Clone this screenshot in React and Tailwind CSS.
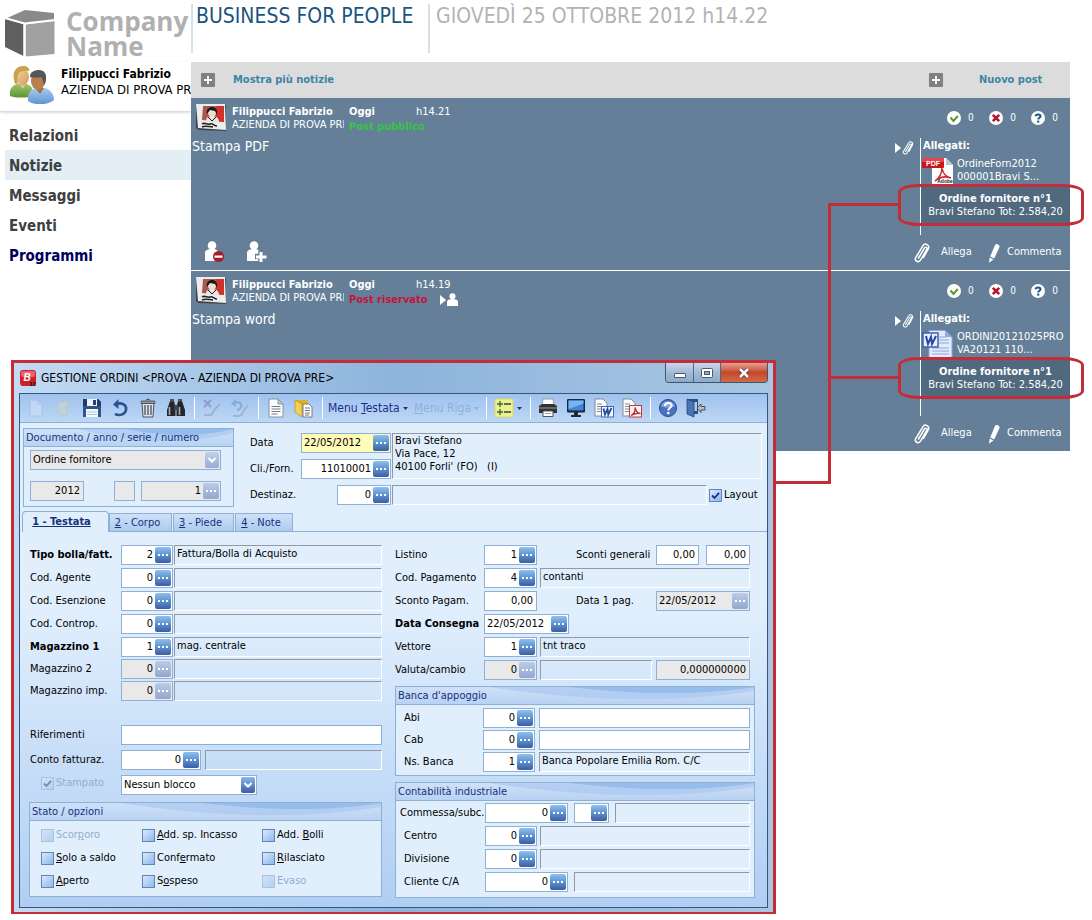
import React, { useId, useState } from "react";

/* ---------- Feed icons ---------- */

function CubeLogo() {
  return (
    <svg viewBox="0 0 50 48" className="h-12 w-[50px] shrink-0" aria-hidden="true">
      <path d="M2 9 20 1 49 4 49 11 20 14.500Z" fill="#8a8a8a" />
      <path d="M0 10 18.500 15 18.500 47 0 38Z" fill="#5f5f5f" />
      <path d="M20.500 15.500 49.500 12 49.500 45 20.500 47.500Z" fill="#a1a1a1" />
      <path d="M0 9 19.500 14.500 50 11 M19.500 14.500V48" stroke="#fff" strokeWidth="2" fill="none" />
    </svg>
  );
}

function PeopleIcon() {
  return (
    <svg viewBox="0 0 46 38" className="h-[38px] w-[46px] shrink-0" aria-hidden="true">
      <defs>
        <linearGradient id="ppGreen" x1="0" y1="0" x2="0" y2="1">
          <stop offset="0" stopColor="#9fc56b" />
          <stop offset="1" stopColor="#5e9334" />
        </linearGradient>
        <linearGradient id="ppBlue" x1="0" y1="0" x2="0" y2="1">
          <stop offset="0" stopColor="#a9cdf2" />
          <stop offset="1" stopColor="#5d93d0" />
        </linearGradient>
        <linearGradient id="ppSkin" x1="0" y1="0" x2="1" y2="1">
          <stop offset="0" stopColor="#f6d3a4" />
          <stop offset="1" stopColor="#d09a5e" />
        </linearGradient>
      </defs>
      <path d="M1 30c-1-7 2-11 8-12h9c5 2 7 7 6 12-7 2-17 2-23 0Z" fill="url(#ppGreen)" />
      <path d="M9 17h8l-3 6Z" fill="#eac08b" />
      <ellipse cx="13.500" cy="11" rx="6.500" ry="8.500" fill="url(#ppSkin)" />
      <path d="M5 14C3 5 8 0 14 0c4 0 7 2 6 5-5-1-9 0-11 3-1 4 0 8-1 11-2-1-3-3-3-5Z" fill="#c9a24a" />
      <path d="M19 35c-1-8 3-12 8-13h9c5 1 9 6 9 12-6 5-19 6-26 1Z" fill="url(#ppBlue)" />
      <path d="M26 22h9l-4 6Z" fill="#a9713f" />
      <ellipse cx="29" cy="15" rx="7" ry="9" fill="#b97f4c" />
      <path d="M21 11c0-5 4-7 9-7s8 4 7 9c0 3-1 5-2 6-1-3-1-6-3-8-4 1-8 1-11 0Z" fill="#55555a" />
    </svg>
  );
}

function PlusSquare() {
  return (
    <svg viewBox="0 0 14 14" className="size-3.5" aria-hidden="true">
      <rect width="14" height="14" rx="1" fill="#808080" />
      <path d="M7 3v8M3 7h8" stroke="#fff" strokeWidth="2" />
    </svg>
  );
}

function Avatar() {
  return (
    <svg viewBox="0 0 30 27" className="h-[27px] w-[30px] shrink-0" aria-hidden="true">
      <path d="M0 0 30 1 30 27 3 26 0 24Z" fill="#3c4248" />
      <path d="M0 0h29l1 26L2 24Z" fill="#ececec" />
      <path d="M7 2h21v16L6 16Z" fill="#a8584c" />
      <path d="M20 2h8v16l-8-1Z" fill="#d0322a" />
      <path d="M10 17c0-4 3-5 6-5s7 1 7 6l-7 1Z" fill="#e9e4e2" />
      <circle cx="16" cy="8.500" r="4" fill="#f0ddd2" />
      <path d="M11 10c-1-5 2-7 5-7s6 2 5 8l-2-4-5-1Z" fill="#181818" />
      <path d="M12 13l4 4 4-4" fill="none" stroke="#181818" />
      <path d="M6 20c3-2 5 1 8 0s4 2 7 2M6 23c4-2 7 0 11 0" fill="none" stroke="#222" strokeWidth="1.500" />
    </svg>
  );
}

function CheckBadge() {
  return (
    <svg viewBox="0 0 14 14" className="size-3.5" aria-hidden="true">
      <circle cx="7" cy="7" r="7" fill="#fff" />
      <path d="M3.500 6.500 6.500 10 10.800 5" fill="none" stroke="#5f9632" strokeWidth="2" />
    </svg>
  );
}

function CrossBadge() {
  return (
    <svg viewBox="0 0 14 14" className="size-3.5" aria-hidden="true">
      <circle cx="7" cy="7" r="7" fill="#fff" />
      <path d="M3.800 3.800 10.200 10.200M10.200 3.800 3.800 10.200" stroke="#b3162b" strokeWidth="2.600" />
    </svg>
  );
}

function QuestionBadge() {
  return (
    <svg viewBox="0 0 14 14" className="size-3.5" aria-hidden="true">
      <circle cx="7" cy="7" r="7" fill="#fff" />
      <path d="M4.700 5.200C4.800 2.800 9.500 2.800 9.500 5.200 9.500 6.800 7.200 6.800 7.200 8.600" fill="none" stroke="#20557f" strokeWidth="2" />
      <rect x="6.100" y="9.600" width="2.200" height="2" fill="#20557f" />
    </svg>
  );
}

function Paperclip({ className }) {
  return (
    <svg viewBox="0 0 16 20" className={className} aria-hidden="true" fill="none" stroke="#fff" strokeWidth="1.500" strokeLinecap="round">
      <path d="M4.500 15 10.500 5c1-1.600 3.200-.4 2.400 1.200L6.500 17.200c-2 3-6.500.6-4.800-2.600L9 2.600C10.800-.6 16 2 14.400 5.600L9.500 14.500" />
    </svg>
  );
}

function Pencil() {
  return (
    <svg viewBox="0 0 12 20" className="h-5 w-3" aria-hidden="true">
      <path d="M7 2c1-2 5-.5 4.500 2L6.200 15.500 2.200 13.500Z" fill="#fff" />
      <path d="M1.600 14.500 5.400 16.400 1 19.800Z" fill="#fff" />
    </svg>
  );
}

function Triangle() {
  return (
    <svg viewBox="0 0 6 10" className="h-2.5 w-1.5" aria-hidden="true">
      <path d="M0 0 6 5 0 10Z" fill="#fff" />
    </svg>
  );
}

function PersonRemove() {
  return (
    <svg viewBox="0 0 20 21" className="h-[21px] w-5" aria-hidden="true">
      <circle cx="7" cy="4.500" r="4.300" fill="#fff" />
      <path d="M0 20V12c0-3 3-4 7-4s6 1 6 4v8Z" fill="#fff" />
      <circle cx="13.500" cy="15.500" r="5.500" fill="#a51d2d" />
      <rect x="9.500" y="14.500" width="8" height="2.200" fill="#fff" />
    </svg>
  );
}

function PersonAdd() {
  return (
    <svg viewBox="0 0 20 21" className="h-[21px] w-5" aria-hidden="true">
      <circle cx="7" cy="4.500" r="4.300" fill="#fff" />
      <path d="M0 20V12c0-3 3-4 7-4s6 1 6 4v8Z" fill="#fff" />
      <path d="M14 9.500v12M8 15.500h12" stroke="#647f97" strokeWidth="5.500" />
      <path d="M14 11v10M9 16h10.500" stroke="#fff" strokeWidth="3" />
    </svg>
  );
}

function PersonSmall() {
  return (
    <svg viewBox="0 0 11 13" className="h-[13px] w-[11px]" aria-hidden="true">
      <circle cx="5.500" cy="3.200" r="3" fill="#fff" />
      <path d="M0 13V9c0-2 2-3 5.500-3S11 7 11 9v4Z" fill="#fff" />
    </svg>
  );
}

function PdfFile() {
  return (
    <svg viewBox="0 0 31 28" className="h-7 w-[31px] shrink-0" aria-hidden="true">
      <path d="M10 1h14l7 7v19H10Z" fill="#fff" />
      <path d="M24 1v7h7Z" fill="#bfc5ca" />
      <path d="M13 24c4-2 7-8 7-13 1 6 4 9 9 10-5-2-11-1-16 3Z" fill="none" stroke="#d4252b" strokeWidth="1.500" />
      <rect x="0" y="1" width="22" height="10" rx="1" fill="#c9161c" />
      <rect x="0" y="1" width="22" height="4" rx="1" fill="#e2454a" />
      <text x="11" y="8.500" textAnchor="middle" fontSize="7" fontWeight="700" fontFamily="Liberation Sans, sans-serif" fill="#fff">PDF</text>
      <text x="23" y="26" textAnchor="middle" fontSize="5" fontWeight="700" fontFamily="Liberation Sans, sans-serif" fill="#222">Adobe</text>
    </svg>
  );
}

function WordFile() {
  return (
    <svg viewBox="0 0 31 28" className="h-7 w-[31px] shrink-0" aria-hidden="true">
      <path d="M7 .5h16l7 7v20H7Z" fill="#e3ebfb" stroke="#8fa8dc" />
      <path d="M23 0v7h7Z" fill="#8fa9e2" />
      <path d="M17 7h7M17 10h10M17 13h10M10 18h17M10 21h17M10 24h17" stroke="#8fa6d8" />
      <rect x="1" y="3" width="15" height="14" fill="#e9f0fd" stroke="#3e62b8" strokeWidth="1.500" />
      <path d="M4 6l2 8 3-7 1 7 4-8" fill="none" stroke="#2848a0" strokeWidth="2" />
    </svg>
  );
}

/* ---------- Toolbar icons ---------- */

const ic = { viewBox: "0 0 20 20", className: "size-5", "aria-hidden": true };

const NewIcon = () => (
  <svg {...ic} opacity="0.550"><path d="M4 2h8l4 4v12H4Z" fill="#d3e4f8" stroke="#9fbde0" /><path d="M12 2v4h4" fill="none" stroke="#9fbde0" /></svg>
);
const OpenIcon = () => (
  <svg {...ic} opacity="0.500"><path d="M4 4l9-2v15l-5 1-4-4Z" fill="#cfd8c0" stroke="#aebfb4" /><path d="M13 2l3 2-3 5" fill="#bccdbb" /></svg>
);
const SaveIcon = () => (
  <svg {...ic}>
    <path d="M1 1h15l3 3v15H1Z" fill="#2f5487" />
    <path d="M1 1h15l3 3v4H1Z" fill="#1e3d6b" />
    <rect x="5" y="1" width="10" height="7" fill="#eef4fb" />
    <rect x="11" y="2" width="3" height="5" fill="#27416c" />
    <rect x="4" y="11" width="12" height="8" fill="#f4f8fd" />
    <path d="M5 14h10M5 16.500h10" stroke="#a9c2e0" />
  </svg>
);
const UndoIcon = () => (
  <svg {...ic}><path d="M6 6c6-2 11 1 10 6-1 5-7 6-11 4" fill="none" stroke="#2c5391" strokeWidth="2.600" /><path d="M3 6.500 8.500 1v10Z" fill="#2c5391" /></svg>
);
const TrashIcon = () => (
  <svg {...ic}>
    <path d="M4 5h12l-1 14H5Z" fill="#dfe3e8" stroke="#4d535b" />
    <path d="M7 7v10M10 7v10M13 7v10" stroke="#555b63" strokeWidth="1.400" />
    <rect x="3" y="3" width="14" height="2.500" rx="1" fill="#8f979f" stroke="#40464d" strokeWidth=".8" />
    <path d="M8 2.500C8 .8 12 .8 12 2.500" stroke="#40464d" fill="none" />
  </svg>
);
const BinocularsIcon = () => (
  <svg {...ic}>
    <path d="M4 3h4l1.500 6v9H1v-6Z" fill="#26262a" />
    <path d="M16 3h-4l-1.500 6v9H19v-6Z" fill="#26262a" />
    <rect x="8" y="7" width="4" height="5" fill="#444" />
    <path d="M3.500 9v8M13.500 9v8" stroke="#a5adb6" strokeWidth="1.600" />
    <rect x="4" y="1" width="4" height="2.500" fill="#555" /><rect x="12" y="1" width="4" height="2.500" fill="#555" />
  </svg>
);
const DeleteRowIcon = () => (
  <svg {...ic} opacity="0.650">
    <path d="M2 2l7 7M9 2 2 9" stroke="#8188b5" strokeWidth="2.200" />
    <path d="M2 17h6c3 0 4-6 6-7l4-4" fill="none" stroke="#94a3bd" strokeWidth="2" />
  </svg>
);
const RestoreRowIcon = () => (
  <svg {...ic} opacity="0.600">
    <path d="M4 5c5-2 8 0 7 4-1 2-2 3-4 3" fill="none" stroke="#6f9ad0" strokeWidth="2.200" /><path d="M1 5.500 6 1v8Z" fill="#6f9ad0" />
    <path d="M3 18h6c3 0 4-5 6-7l3-4" fill="none" stroke="#94a3bd" strokeWidth="2" />
  </svg>
);
const DocIcon = () => (
  <svg {...ic}>
    <path d="M3 1h9l5 5v13H3Z" fill="#fdfdfd" stroke="#8b9098" />
    <path d="M12 1v5h5Z" fill="#cdd2d8" stroke="#8b9098" />
    <path d="M5.500 8.500h9M5.500 11h9M5.500 13.500h9M5.500 16h6" stroke="#777d86" />
  </svg>
);
const FolderDocIcon = () => (
  <svg {...ic}>
    <path d="M1 2h13v12l-7 0Z" fill="#e0b02a" />
    <path d="M1 2l7 4v13l-7-5Z" fill="#f4cf55" stroke="#b88a1c" strokeWidth=".7" />
    <path d="M9 6h6l3 3v10H9Z" fill="#fff" stroke="#777d86" />
    <path d="M11 10h5M11 12.500h5M11 15h5M11 17h4" stroke="#6c727b" />
  </svg>
);
const ListIcon = () => (
  <svg {...ic}>
    <rect x="1" y="1" width="18" height="18" rx="1" fill="#eef08a" stroke="#d7da6b" />
    <path d="M3 6h6M6 3v6M3 14h6M6 11v6" stroke="#2f6e4a" strokeWidth="1.300" />
    <path d="M10 6h7M10 14h7" stroke="#2b3f5c" strokeWidth="1.600" />
  </svg>
);
const PrinterIcon = () => (
  <svg {...ic}>
    <path d="M5 1h10l1 7H4Z" fill="#fdfdfd" stroke="#9aa0a8" />
    <path d="M1 8l3-2h12l3 2v7H1Z" fill="#303236" />
    <path d="M1 10h18" stroke="#777b80" strokeWidth="1.500" />
    <path d="M5 13h10v5.500H5Z" fill="#fff" stroke="#555" />
    <path d="M7 15.500h6" stroke="#9aa0a8" />
  </svg>
);
const MonitorIcon = () => (
  <svg {...ic}>
    <rect x="1" y="1" width="18" height="13.500" rx="1" fill="#1d2733" />
    <rect x="2.500" y="2.500" width="15" height="10" fill="#3f86d8" />
    <path d="M2.500 2.500h15v3L2.500 11Z" fill="#77b3f0" />
    <path d="M8 14h4v3h3v2H5v-2h3Z" fill="#222a33" />
  </svg>
);
const WordIcon = () => (
  <svg {...ic}>
    <path d="M1 1h8l4 4v13H1Z" fill="#fbfcfd" stroke="#858b93" />
    <path d="M3 6h5M3 8.500h8M3 11h5M3 13.500h4" stroke="#848a92" />
    <rect x="7.500" y="8.500" width="12" height="10.500" fill="#f4f8ff" stroke="#3d66b8" />
    <path d="M9.500 10.500l1.500 6 2.500-5.500.8 5.500 3.200-6.500" fill="none" stroke="#244a9c" strokeWidth="1.800" />
  </svg>
);
const PdfIcon = () => (
  <svg {...ic}>
    <path d="M1 1h8l4 4v13H1Z" fill="#fbfcfd" stroke="#858b93" />
    <path d="M3 6h5M3 8.500h8M3 11h5M3 13.500h4" stroke="#848a92" />
    <rect x="7.500" y="7.500" width="12" height="11.500" fill="#fff5f4" stroke="#c23b3b" />
    <path d="M9 17.500c3-1.500 4.500-4.500 4-8 1 4 2.500 6 5.500 6-3-.5-6 0-9.500 2Z" fill="none" stroke="#c5262b" strokeWidth="1.300" />
  </svg>
);
const HelpIcon = () => (
  <svg {...ic}>
    <circle cx="10" cy="10" r="8.500" fill="#4a72c0" stroke="#27488e" />
    <path d="M3 8a7.500 7.500 0 0 1 14 0c-4 2-10 2-14 0Z" fill="#86a8e2" />
    <path d="M7 8c0-4 6.500-4 6.500-.5 0 2.200-3.200 2.300-3.200 5" fill="none" stroke="#fff" strokeWidth="2" />
    <circle cx="10.300" cy="15" r="1.300" fill="#fff" />
  </svg>
);
const ExitIcon = () => (
  <svg {...ic}>
    <path d="M1 1h11v15H1Z" fill="#2f4f80" />
    <path d="M8 4h3v9H8Z" fill="#a9c8ef" />
    <path d="M1 1l7 3v15l-7-3Z" fill="#4a74b4" stroke="#27467a" strokeWidth=".8" />
    <path d="M11 10l4-4v2.500h4v3.500h-4v2.500Z" fill="#b9bcc1" stroke="#3f444b" strokeWidth=".9" />
  </svg>
);

/* ---------- Form controls ---------- */

function Dots({ disabled, label }) {
  return (
    <button
      type="button"
      aria-label={"Cerca " + label}
      disabled={disabled}
      className={
        "flex size-4 shrink-0 items-center justify-center gap-[2px] self-center rounded-[2px] " +
        (disabled
          ? "bg-linear-to-b from-[#b9cde8] to-[#93a6d0]"
          : "bg-linear-to-b from-[#8fc0ee] via-[#5c92cf] to-[#3c5da3]")
      }
    >
      <span className="size-[2px] bg-white" />
      <span className="size-[2px] bg-white" />
      <span className="size-[2px] bg-white" />
    </button>
  );
}

function Box({ id, label, value = "", w, dots = false, disabled = false, yellow = false, left = false }) {
  const [v, setV] = useState(value);
  return (
    <div
      className={
        "flex h-5 shrink-0 border border-[#8db0d6] pr-px " +
        w +
        " " +
        (disabled ? "bg-[#e9e9e9]" : yellow ? "bg-[#fffbb8]" : "bg-white")
      }
    >
      <input
        id={id}
        aria-label={id ? undefined : label}
        value={v}
        disabled={disabled}
        onChange={(e) => setV(e.target.value)}
        className={"w-0 min-w-0 flex-1 bg-transparent px-[2px] text-black outline-none " + (left ? "text-left" : "text-right")}
      />
      {dots && <Dots disabled={disabled} label={label} />}
    </div>
  );
}

function Sunken({ children, className = "" }) {
  return (
    <div className={"h-5 min-w-0 overflow-hidden border border-t-[#9099a5] border-r-white border-b-white border-l-[#9099a5] px-[2px] leading-4 " + className}>
      {children}
    </div>
  );
}

function Row({ label, bold = false, labelW, children, id }) {
  return (
    <div className="flex items-center">
      <label htmlFor={id} className={"shrink-0 leading-5 whitespace-nowrap " + labelW + (bold ? " font-bold" : "")}>
        {label}
      </label>
      {children}
    </div>
  );
}

function LookupRow({ label, bold, value, desc, disabled, labelW = "w-[92px]", w = "w-[52px]", gap = "ml-px", openDesc = false }) {
  const id = useId();
  return (
    <Row label={label} bold={bold} labelW={labelW} id={id}>
      <Box id={id} label={label} value={value} w={w} dots disabled={disabled} />
      {openDesc ? (
        <div className={"flex min-w-0 flex-1 " + gap}>
          <Box label={label + " descrizione"} w="w-full" left />
        </div>
      ) : (
        <Sunken className={"flex-1 " + gap}>{desc}</Sunken>
      )}
    </Row>
  );
}

function Tick({ faded }) {
  return (
    <svg viewBox="0 0 13 13" className="pointer-events-none col-start-1 row-start-1 size-[13px]" aria-hidden="true">
      <path d="M3 6.500 5.500 9 10 3.800" fill="none" stroke={faded ? "#6f8bb8" : "#1c2f86"} strokeWidth="1.800" />
    </svg>
  );
}

function Check({ before = "", hot = "", after = "", disabled = false, initial = false }) {
  const [on, setOn] = useState(initial);
  return (
    <label className={"flex h-4 items-center gap-[2px] whitespace-nowrap " + (disabled ? "text-[#93add0]" : "text-black")}>
      <span className="grid size-[13px] shrink-0">
        <input
          type="checkbox"
          checked={on}
          disabled={disabled}
          onChange={() => setOn(!on)}
          className={
            "col-start-1 row-start-1 size-[13px] appearance-none border bg-linear-to-br " +
            (disabled ? "border-[#a9c2e4] from-[#d3e4f7] to-[#b4cef0]" : "border-[#5f86b8] from-[#d9eafc] to-[#8fb6ea]")
          }
        />
        {on && <Tick faded={disabled} />}
      </span>
      <span>
        {before}
        <u>{hot}</u>
        {after}
      </span>
    </label>
  );
}

function Select({ id, label, options, disabled, className = "" }) {
  return (
    <div className={"grid h-5 border border-[#8db0d6] " + (disabled ? "bg-[#e9e9e9] " : "bg-white ") + className}>
      <select
        id={id}
        aria-label={label}
        disabled={disabled}
        className="col-start-1 row-start-1 w-full appearance-none bg-transparent px-[2px] leading-4 text-black opacity-100 outline-none"
      >
        {options.map((o) => (
          <option key={o}>{o}</option>
        ))}
      </select>
      <svg viewBox="0 0 14 16" className="pointer-events-none col-start-1 row-start-1 mr-px h-4 w-3.5 self-center justify-self-end" aria-hidden="true">
        <defs>
          <linearGradient id={disabled ? "selOff" : "selOn"} x1="0" y1="0" x2="0" y2="1">
            <stop offset="0" stopColor={disabled ? "#bfd2ec" : "#86b9ea"} />
            <stop offset="1" stopColor={disabled ? "#98abd3" : "#3c5da3"} />
          </linearGradient>
        </defs>
        <rect width="14" height="16" rx="2" fill={disabled ? "url(#selOff)" : "url(#selOn)"} />
        <path d="M3.500 6 7 9.500 10.500 6" fill="none" stroke="#fff" strokeWidth="2" />
      </svg>
    </div>
  );
}

function Group({ title, className = "", children }) {
  return (
    <fieldset className={"min-w-0 border border-[#8db0d6] bg-[#e1effd] " + className} aria-label={title}>
      <div className="grid h-[18px] overflow-hidden border-b border-[#8db0d6] bg-linear-to-b from-[#cfe1f8] to-[#b9d2f2]">
        <svg viewBox="0 0 350 17" preserveAspectRatio="none" className="col-start-1 row-start-1 h-full w-full" aria-hidden="true">
          <path d="M90 0C170 12 260 18 350 4V0Z" fill="#a9c8ef" opacity=".7" />
          <path d="M170 0C240 8 300 8 350 0Z" fill="#8fb8e9" opacity=".8" />
        </svg>
        <span className="col-start-1 row-start-1 px-[2px] leading-[17px] text-[#15317e]">{title}</span>
      </div>
      {children}
    </fieldset>
  );
}

function ToolButton({ label, icon, disabled, className = "w-7" }) {
  return (
    <button type="button" aria-label={label} disabled={disabled} className={"flex h-full shrink-0 items-center justify-center " + className}>
      {icon}
    </button>
  );
}

const Sep = () => (
  <span className="flex h-full w-2 shrink-0 items-center justify-center">
    <span className="h-[22px] w-px bg-white" />
  </span>
);

const Caret = ({ className = "fill-[#1b2f86]" }) => (
  <svg viewBox="0 0 5 3" className={"h-[3px] w-[5px] " + className} aria-hidden="true">
    <path d="M0 0h5L2.500 3Z" />
  </svg>
);

/* ---------- Order window ---------- */

function TitleBar() {
  return (
    <div className="flex h-[30px] items-start pr-[5px] pl-[6px]">
      <svg viewBox="0 0 16 16" className="mt-[7px] size-4 shrink-0" aria-hidden="true">
        <rect width="16" height="16" rx="3" fill="#cf2029" />
        <rect x="1" y="1" width="14" height="6" rx="2" fill="#e8666b" />
        <text x="7" y="10.500" textAnchor="middle" fontSize="10" fontWeight="700" fontStyle="italic" fontFamily="Liberation Sans, sans-serif" fill="#fff">B</text>
        <text x="12.500" y="15.500" textAnchor="middle" fontSize="6" fontWeight="700" fontFamily="Liberation Sans, sans-serif" fill="#111">13</text>
      </svg>
      <h2 className="mt-[7px] ml-[5px] flex-1 truncate text-[12px] leading-4 text-black">GESTIONE ORDINI &lt;PROVA - AZIENDA DI PROVA PRE&gt;</h2>
      <div className="flex h-5 overflow-hidden rounded-b-[4px] border border-t-0 border-[#3f5672]">
        <button type="button" aria-label="Riduci" className="flex w-7 items-center justify-center border-r border-[#4f6a8a] bg-linear-to-b from-[#c5d7ea] via-[#a2bbd6] to-[#8dabc9] pt-[5px]">
          <span className="h-[5px] w-3 rounded-[1px] border border-[#4a5a6c] bg-white" />
        </button>
        <button type="button" aria-label="Ingrandisci" className="flex w-[27px] items-center justify-center border-r border-[#4f6a8a] bg-linear-to-b from-[#c5d7ea] via-[#a2bbd6] to-[#8dabc9]">
          <svg viewBox="0 0 12 10" className="h-2.5 w-3" aria-hidden="true">
            <rect x=".5" y=".5" width="11" height="9" rx="1" fill="#fff" stroke="#4a5a6c" />
            <rect x="3.500" y="3.500" width="5" height="3" fill="#8dabc9" stroke="#4a5a6c" />
          </svg>
        </button>
        <button type="button" aria-label="Chiudi" className="flex w-[46px] items-center justify-center bg-linear-to-b from-[#e0a08f] via-[#c8462c] to-[#cf6a48]">
          <svg viewBox="0 0 12 10" className="h-2.5 w-3" aria-hidden="true">
            <path d="M2 1l8 8M10 1l-8 8" stroke="#5a3430" strokeWidth="4" />
            <path d="M2 1l8 8M10 1l-8 8" stroke="#fff" strokeWidth="2.500" />
          </svg>
        </button>
      </div>
    </div>
  );
}

function Toolbar() {
  return (
    <div className="flex h-[29px] items-center border-b border-[#8db0d6] bg-linear-to-b from-[#9fc2ee] to-[#bdd7f5] pl-[2px]">
      <ToolButton label="Nuovo" icon={<NewIcon />} disabled />
      <ToolButton label="Apri" icon={<OpenIcon />} disabled />
      <ToolButton label="Salva" icon={<SaveIcon />} />
      <ToolButton label="Annulla" icon={<UndoIcon />} />
      <ToolButton label="Elimina" icon={<TrashIcon />} />
      <ToolButton label="Cerca" icon={<BinocularsIcon />} />
      <Sep />
      <ToolButton label="Elimina riga" icon={<DeleteRowIcon />} disabled />
      <ToolButton label="Ripristina riga" icon={<RestoreRowIcon />} disabled />
      <Sep />
      <ToolButton label="Documento" icon={<DocIcon />} />
      <ToolButton label="Cartella documenti" icon={<FolderDocIcon />} />
      <Sep />
      <button type="button" className="flex w-[88px] shrink-0 items-center gap-[3px] pl-[2px] text-[12px] whitespace-nowrap text-[#1b2f86]">
        <span>Menu <u>T</u>estata</span>
        <Caret />
      </button>
      <button type="button" disabled className="flex w-[68px] shrink-0 items-center gap-[3px] text-[12px] whitespace-nowrap text-[#8fb0dc]">
        <span><u>M</u>enu Riga</span>
        <Caret className="fill-[#8fb0dc]" />
      </button>
      <Sep />
      <button type="button" aria-label="Vista" className="flex h-full w-9 shrink-0 items-center gap-[3px] pl-1">
        <ListIcon />
        <Caret />
      </button>
      <Sep />
      <ToolButton label="Stampa" icon={<PrinterIcon />} />
      <ToolButton label="Anteprima" icon={<MonitorIcon />} />
      <ToolButton label="Esporta Word" icon={<WordIcon />} />
      <ToolButton label="Esporta PDF" icon={<PdfIcon />} />
      <Sep />
      <ToolButton label="Guida" icon={<HelpIcon />} />
      <ToolButton label="Esci" icon={<ExitIcon />} />
    </div>
  );
}

function HeaderForm() {
  return (
    <div className="flex gap-4 bg-[#e1effd] pt-[5px] pr-[5px] pl-[3px]">
      <Group title="Documento / anno / serie / numero" className="h-[79px] w-[211px] shrink-0">
        <div className="flex flex-col gap-[11px] px-[6px] pt-[3px]">
          <Select label="Documento" options={["Ordine fornitore"]} disabled className="w-[191px]" />
          <div className="flex">
            <Box label="Anno" value="2012" w="w-[54px]" disabled />
            <div className="ml-[30px]"><Box label="Serie" w="w-[21px]" disabled /></div>
            <div className="ml-[6px]"><Box label="Numero" value="1" w="w-[80px]" dots disabled /></div>
          </div>
        </div>
      </Group>
      <div className="flex min-w-0 flex-1 pt-[5px]">
        <div className="flex w-[142px] shrink-0 flex-col gap-[6px]">
          <Row label="Data" labelW="w-[51px]" id="data"><Box id="data" label="Data" value="22/05/2012" w="w-[90px]" dots yellow left /></Row>
          <Row label="Cli./Forn." labelW="w-[51px]" id="cli"><Box id="cli" label="Cli./Forn." value="11010001" w="w-[90px]" dots /></Row>
          <Row label="Destinaz." labelW="w-[87px]" id="dest"><Box id="dest" label="Destinaz." value="0" w="w-[54px]" dots /></Row>
        </div>
        <div className="flex min-w-0 flex-1 flex-col gap-[6px]">
          <div className="h-[46px] border border-t-[#9099a5] border-r-white border-b-white border-l-[#9099a5] px-[2px] leading-[13px] text-black">
            Bravi Stefano
            <br />
            Via Pace, 12
            <br />
            40100 Forli&#39; (FO) &nbsp; (I)
          </div>
          <div className="flex items-center gap-[2px]">
            <Sunken className="flex-1" />
            <div className="w-[53px] shrink-0"><Check after="Layout" initial /></div>
          </div>
        </div>
      </div>
    </div>
  );
}

function Tabs() {
  const rest = [
    ["2", " - Corpo", "w-[63px]"],
    ["3", " - Piede", "w-[61px]"],
    ["4", " - Note", "w-[58px]"],
  ];
  return (
    <div role="tablist" className="flex h-[25px] items-end bg-[#e1effd] pl-[2px]">
      <button type="button" role="tab" aria-selected="true" className="h-[21px] w-[87px] rounded-t-[4px] border border-b-0 border-[#8db0d6] bg-[#e1effd] pr-2 font-bold text-[#15317e] underline">
        1 - Testata
      </button>
      <div className="flex flex-1 items-end gap-px border-b border-[#8db0d6]">
        {rest.map(([n, t, w]) => (
          <button key={n} type="button" role="tab" aria-selected="false" className={"h-[18px] border border-b-0 border-[#8db0d6] bg-linear-to-b from-[#cfe1f8] to-[#adcaee] pr-[6px] leading-4 text-[#15317e] " + w}>
            <u>{n}</u>
            {t}
          </button>
        ))}
      </div>
    </div>
  );
}

function LeftColumn() {
  return (
    <div className="flex w-[353px] shrink-0 flex-col">
      <div className="flex flex-col gap-[3px] pl-px">
        <LookupRow label="Tipo bolla/fatt." bold labelW="w-[91px]" value="2" desc="Fattura/Bolla di Acquisto" />
        <LookupRow label="Cod. Agente" labelW="w-[91px]" value="0" />
        <LookupRow label="Cod. Esenzione" labelW="w-[91px]" value="0" />
        <LookupRow label="Cod. Controp." labelW="w-[91px]" value="0" />
      </div>
      <div className="mt-[3px] flex flex-col gap-[2px] pl-px">
        <LookupRow label="Magazzino 1" bold labelW="w-[91px]" value="1" desc="mag. centrale" />
        <LookupRow label="Magazzino 2" labelW="w-[91px]" value="0" disabled />
        <LookupRow label="Magazzino imp." labelW="w-[91px]" value="0" disabled />
      </div>
      <div className="mt-6 flex flex-col gap-[5px] pl-px">
        <Row label="Riferimenti" labelW="w-[91px]" id="rif">
          <div className="flex min-w-0 flex-1"><Box id="rif" label="Riferimenti" w="w-full" left /></div>
        </Row>
        <LookupRow label="Conto fatturaz." labelW="w-[91px]" value="0" w="w-[80px]" gap="ml-1" />
        <div className="flex items-start">
          <div className="w-[91px] pl-[11px]"><Check after="Stampato" disabled initial /></div>
          <Select label="Blocco" options={["Nessun blocco"]} className="w-[136px]" />
        </div>
      </div>
      <Group title="Stato / opzioni" className="mt-[7px] h-[95px]">
        <div className="grid grid-cols-[101px_120px_1fr] gap-y-[7px] pt-[6px] pl-[11px]">
          <Check before="Scor" hot="p" after="oro" disabled />
          <Check hot="A" after="dd. sp. Incasso" />
          <Check before="Add. " hot="B" after="olli" />
          <Check hot="S" after="olo a saldo" />
          <Check before="Conf" hot="e" after="rmato" />
          <Check hot="R" after="ilasciato" />
          <Check hot="A" after="perto" />
          <Check before="S" hot="o" after="speso" />
          <Check after="Evaso" disabled />
        </div>
      </Group>
    </div>
  );
}

function RightColumn() {
  return (
    <div className="flex min-w-0 flex-1 flex-col">
      <div className="flex flex-col gap-[3px] pr-[5px]">
        <Row label="Listino" labelW="w-[89px]" id="listino">
          <Box id="listino" label="Listino" value="1" w="w-[53px]" dots />
          <label htmlFor="sc1" className="ml-[39px] flex-1">Sconti generali</label>
          <Box id="sc1" label="Sconto 1" value="0,00" w="w-[43px]" />
          <div className="ml-[7px]"><Box label="Sconto 2" value="0,00" w="w-11" /></div>
        </Row>
        <LookupRow label="Cod. Pagamento" labelW="w-[89px]" w="w-[53px]" gap="ml-[3px]" value="4" desc="contanti" />
        <Row label="Sconto Pagam." labelW="w-[89px]" id="scp">
          <Box id="scp" label="Sconto Pagam." value="0,00" w="w-[53px]" />
          <label htmlFor="d1" className="ml-[39px] flex-1">Data 1 pag.</label>
          <Box id="d1" label="Data 1 pag." value="22/05/2012" w="w-[94px]" dots disabled left />
        </Row>
        <Row label="Data Consegna" bold labelW="w-[89px]" id="dc">
          <Box id="dc" label="Data Consegna" value="22/05/2012" w="w-[85px]" dots left />
        </Row>
        <LookupRow label="Vettore" labelW="w-[89px]" w="w-[53px]" gap="ml-[3px]" value="1" desc="tnt traco" />
        <Row label="Valuta/cambio" labelW="w-[89px]" id="val">
          <Box id="val" label="Valuta" value="0" w="w-[53px]" dots disabled />
          <Sunken className="mr-1 ml-[3px] flex-1" />
          <Box label="Cambio" value="0,000000000" w="w-[94px]" disabled />
        </Row>
      </div>
      <Group title="Banca d'appoggio" className="mt-[6px] h-[90px]">
        <div className="flex flex-col gap-[2px] pt-[3px] pr-1 pl-2">
          <LookupRow label="Abi" labelW="w-[79px]" value="0" gap="ml-1" openDesc />
          <LookupRow label="Cab" labelW="w-[79px]" value="0" gap="ml-1" openDesc />
          <LookupRow label="Ns. Banca" labelW="w-[79px]" value="1" gap="ml-1" desc="Banca Popolare Emilia Rom. C/C" />
        </div>
      </Group>
      <Group title="Contabilità industriale" className="mt-[6px] h-[116px]">
        <div className="flex flex-col gap-[3px] pt-[2px] pr-1 pl-1">
          <Row label="Commessa/subc." labelW="w-[85px]" id="com">
            <Box id="com" label="Commessa" value="0" w="w-[83px]" dots />
            <div className="ml-[6px]"><Box label="Sottocommessa" w="w-[35px]" dots /></div>
            <Sunken className="ml-[6px] flex-1" />
          </Row>
          <LookupRow label="Centro" labelW="w-[85px] pl-1" value="0" gap="ml-[3px]" />
          <LookupRow label="Divisione" labelW="w-[85px] pl-1" value="0" gap="ml-[3px]" />
          <LookupRow label="Cliente C/A" labelW="w-[85px] pl-1" w="w-[83px]" value="0" gap="ml-[6px]" />
        </div>
      </Group>
    </div>
  );
}

function OrderWindow() {
  return (
    <section className="absolute top-[360px] left-[11px] w-[765px] border-[3px] border-[#c42d38] bg-linear-to-r from-[#c3dbf3] via-[#8db4dc] to-[#a9c6e2] text-[11px] text-black">
      <TitleBar />
      <div className="mx-[5px] mb-1 border border-[#35567f]">
        <Toolbar />
        <HeaderForm />
        <Tabs />
        <div className="flex gap-[13px] bg-linear-to-b from-[#e1effd] from-20% to-[#b0cef2] pt-[13px] pr-3 pb-[9px] pl-[9px]">
          <LeftColumn />
          <RightColumn />
        </div>
      </div>
    </section>
  );
}

/* ---------- Feed ---------- */

function Vote({ icon, label }) {
  return (
    <button type="button" aria-label={label} className="flex items-center gap-[7px]">
      {icon}
      <span className="text-[10px] leading-4">0</span>
    </button>
  );
}

function Post({ time, status, statusClass, arrow, body, file, lines, people, className }) {
  return (
    <article className={"flex bg-[#647f97] text-white " + className}>
      <div className="flex min-w-0 flex-1 flex-col">
        <header className="flex pt-[6px] pl-[5px]">
          <Avatar />
          <div className="ml-[6px] w-28 overflow-hidden pt-px text-[11px] leading-[13px] whitespace-nowrap">
            <div className="font-bold">Filippucci Fabrizio</div>
            <div>AZIENDA DI PROVA PRE</div>
          </div>
          <div className="ml-[5px] text-[11px] leading-[15px]">
            <div className="flex">
              <span className="w-[67px] font-bold">Oggi</span>
              <span>{time}</span>
            </div>
            <div className="flex items-center gap-3 font-bold">
              <span className={statusClass}>{status}</span>
              {arrow && (
                <span className="flex items-center gap-px">
                  <Triangle />
                  <PersonSmall />
                </span>
              )}
            </div>
          </div>
        </header>
        <p className="flex-1 pt-[3px] pl-px text-[14px] leading-[18px]">{body}</p>
        {people && (
          <div className="flex gap-[22px] pb-2 pl-[14px]">
            <button type="button" aria-label="Rimuovi persona"><PersonRemove /></button>
            <button type="button" aria-label="Aggiungi persona"><PersonAdd /></button>
          </div>
        )}
      </div>
      <div className="flex w-[175px] shrink-0 flex-col">
        <div className="flex h-10 items-center justify-between pr-3 pl-[52px]">
          <Vote icon={<CheckBadge />} label="Approva" />
          <Vote icon={<CrossBadge />} label="Rifiuta" />
          <Vote icon={<QuestionBadge />} label="Domanda" />
        </div>
        <div className="flex flex-1">
          <div className="flex h-5 w-[25px] items-center gap-px">
            <Triangle />
            <Paperclip className="h-3.5 w-3" />
          </div>
          <div className="flex-1 border-l border-white">
            <div className="pl-[2px] text-[11px] leading-4 font-bold">Allegati:</div>
            <div className="flex h-[33px] gap-1 pt-[3px] pl-px">
              {file}
              <a href="#allegato" className="text-[11px] leading-[13px] whitespace-nowrap">
                {lines[0]}
                <br />
                {lines[1]}
              </a>
            </div>
            <div className="relative bg-[#50697e] py-[5px] text-center text-[11px] leading-[13px] whitespace-nowrap">
              <div className="font-bold">Ordine fornitore n°1</div>
              <div>Bravi Stefano Tot: 2.584,20</div>
              <span className="absolute -top-[3px] -right-[14px] -bottom-[3px] -left-[23px] rounded-[22px/8px] border-[3px] border-[#c42d38]" />
            </div>
          </div>
        </div>
        <footer className="flex h-[35px] items-center pl-[19px] text-[11px]">
          <button type="button" className="flex w-[74px] items-center gap-[11px]">
            <Paperclip className="h-5 w-4" />
            Allega
          </button>
          <button type="button" className="flex items-center gap-[7px]">
            <Pencil />
            Commenta
          </button>
        </footer>
      </div>
    </article>
  );
}

function Sidebar() {
  const items = ["Relazioni", "Notizie", "Messaggi", "Eventi", "Programmi"];
  return (
    <aside className="w-[191px] shrink-0">
      <div className="flex h-[50px] gap-[6px] overflow-hidden border-b border-[#dcdcdc] pt-1 pl-[9px] whitespace-nowrap text-black shadow-sm">
        <PeopleIcon />
        <div className="min-w-0 leading-4">
          <div className="text-[12px] font-bold">Filippucci Fabrizio</div>
          <div className="text-[13px]">AZIENDA DI PROVA PRE</div>
        </div>
      </div>
      <nav className="pt-[8px] pl-[5px]">
        {items.map((t) => (
          <a
            key={t}
            href={"#" + t.toLowerCase()}
            className={
              "block h-[30px] pt-px pl-1 text-[15px] leading-[30px] font-bold " +
              (t === "Notizie" ? "bg-[#e3eef5] text-[#404040]" : t === "Programmi" ? "text-[#00005c]" : "text-[#404040]")
            }
          >
            {t}
          </a>
        ))}
      </nav>
    </aside>
  );
}

export default function App() {
  return (
    <div className="relative min-h-[914px] bg-white font-['DejaVu_Sans_Condensed','DejaVu_Sans',sans-serif]">
      <header className="flex h-[62px] items-start">
        <div className="flex w-[191px] shrink-0 gap-[11px] pt-[9px] pl-[5px]">
          <CubeLogo />
          <div className="font-['Open_Sans',sans-serif] text-[26px] leading-[25px] font-bold text-[#b0b0b0]">
            Company
            <br />
            Name
          </div>
        </div>
        <h1 className="mt-1 h-[49px] w-[237px] border-l-2 border-[#cfe3f0] pl-[3px] text-[21px] leading-6 whitespace-nowrap text-[#1b5480]">BUSINESS FOR PEOPLE</h1>
        <p className="mt-1 h-[49px] border-l-2 border-[#d5e0e8] pl-[6px] text-[21px] leading-6 whitespace-nowrap text-[#b3b3b3]">GIOVEDÌ 25 OTTOBRE 2012 h14.22</p>
      </header>
      <div className="flex items-start">
        <Sidebar />
        <main className="mr-[22px] min-w-0 flex-1">
          <div className="flex h-9 items-center justify-between bg-[#dcdcdc] pl-[10px] text-[11px] font-bold text-[#3c84a8]">
            <button type="button" className="flex items-center gap-[18px]"><PlusSquare />Mostra più notizie</button>
            <button type="button" className="flex w-[141px] items-center gap-9"><PlusSquare />Nuovo post</button>
          </div>
          <Post
            className="h-[173px] border-b border-white"
            time="h14.21"
            status="Post pubblico"
            statusClass="text-[#35c545]"
            body="Stampa PDF"
            file={<PdfFile />}
            lines={["OrdineForn2012", "000001Bravi S..."]}
            people
          />
          <Post
            className="h-[180px]"
            time="h14.19"
            status="Post riservato"
            statusClass="text-[#c4143c]"
            arrow
            body="Stampa word"
            file={<WordFile />}
            lines={["ORDINI20121025PRO", "VA20121 110..."]}
          />
        </main>
      </div>
      <div className="absolute top-[203px] right-[193px] left-[828px] h-[176px] border-y-[3px] border-l-[3px] border-[#c42d38]" />
      <div className="absolute top-[376px] left-[776px] h-[108px] w-[55px] border-r-[3px] border-b-[3px] border-[#c42d38]" />
      <OrderWindow />
    </div>
  );
}
